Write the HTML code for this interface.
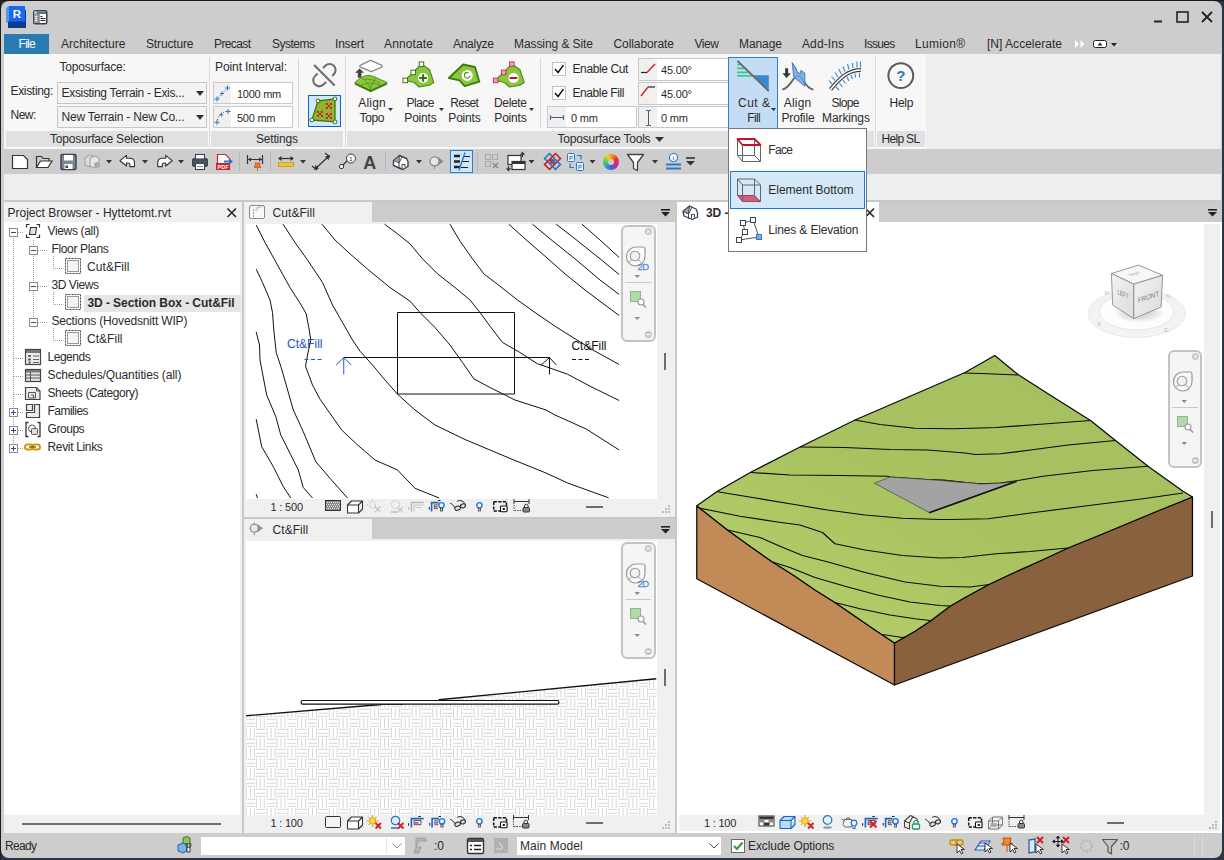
<!DOCTYPE html>
<html><head><meta charset="utf-8"><title>Revit</title>
<style>
html,body{margin:0;padding:0;}
body{width:1224px;height:860px;overflow:hidden;background:#cdcdcd;position:relative;font-family:"Liberation Sans",sans-serif;}
div{position:absolute;box-sizing:border-box;}
svg{position:absolute;overflow:visible;}
.t{white-space:nowrap;color:#2b2b2b;font-family:"Liberation Sans",sans-serif;}
.w{color:#fff;}
.b{font-weight:bold;}
.inp{background:#fff;border:1px solid #c8c8c8;}
.cmb{background:#f3f3f3;border:1px solid #c6c6c6;}
</style></head><body>
<svg style="left:6px;top:6px" width="22" height="24" viewBox="0 0 22 24">
<polygon points="0,2 3,0 3,16 0,17" fill="#5b93ec"/>
<rect x="3" y="0" width="16" height="16" fill="#1768f2"/>
<rect x="19" y="4" width="1" height="12" fill="#0c3c96"/>
<rect x="2" y="15.5" width="18" height="6.5" fill="#0b3a8e"/>
<text x="11" y="12" font-family="Liberation Sans, sans-serif" font-weight="bold" font-size="11.5" fill="#fff" text-anchor="middle">R</text>
</svg>
<svg style="left:33px;top:10px" width="15" height="15" viewBox="0 0 15 15">
<rect x="0.75" y="0.75" width="13" height="13" rx="1.5" fill="#fff" stroke="#3a3f48" stroke-width="1.5"/>
<rect x="1.5" y="1.5" width="11.5" height="2.5" fill="#6a7280"/>
<rect x="1.5" y="1.5" width="2" height="2" fill="#d8f4ff"/>
<rect x="1.5" y="4" width="4" height="9" fill="#9aa0aa"/>
<rect x="2.2" y="6" width="2" height="1" fill="#fff"/><rect x="2.2" y="8" width="2" height="1" fill="#fff"/><rect x="2.2" y="10" width="2" height="1" fill="#fff"/>
<rect x="5.5" y="4" width="1" height="9.5" fill="#3a3f48"/>
<rect x="7.5" y="6" width="2" height="1" fill="#222"/><rect x="7.5" y="8" width="5" height="1" fill="#222"/><rect x="7.5" y="10" width="5" height="1" fill="#222"/>
</svg>
<svg style="left:1150px;top:8px" width="70" height="18" viewBox="0 0 70 18">
<rect x="4" y="12.500" width="8" height="2" fill="#222"/>
<rect x="27" y="4" width="11" height="10" fill="none" stroke="#222" stroke-width="1.6"/>
<path d="M52 4 L62 14 M62 4 L52 14" stroke="#222" stroke-width="1.8" fill="none"/>
</svg>
<div style="left:4px;top:34px;width:45px;height:20px;background:#2a7ab2;"></div>
<div class="t w" style="left:18.5px;top:37.34px;font-size:12px;line-height:14px;letter-spacing:-0.700px;">File</div>
<div class="t" style="left:61px;top:37.34px;font-size:12px;line-height:14px;letter-spacing:0.043px;">Architecture</div>
<div class="t" style="left:146px;top:37.34px;font-size:12px;line-height:14px;letter-spacing:-0.148px;">Structure</div>
<div class="t" style="left:214px;top:37.34px;font-size:12px;line-height:14px;letter-spacing:-0.614px;">Precast</div>
<div class="t" style="left:272px;top:37.34px;font-size:12px;line-height:14px;letter-spacing:-0.501px;">Systems</div>
<div class="t" style="left:335px;top:37.34px;font-size:12px;line-height:14px;letter-spacing:-0.202px;">Insert</div>
<div class="t" style="left:384px;top:37.34px;font-size:12px;line-height:14px;letter-spacing:0.137px;">Annotate</div>
<div class="t" style="left:453px;top:37.34px;font-size:12px;line-height:14px;letter-spacing:-0.282px;">Analyze</div>
<div class="t" style="left:514px;top:37.34px;font-size:12px;line-height:14px;letter-spacing:-0.080px;">Massing &amp; Site</div>
<div class="t" style="left:613.5px;top:37.34px;font-size:12px;line-height:14px;letter-spacing:-0.087px;">Collaborate</div>
<div class="t" style="left:694.5px;top:37.34px;font-size:12px;line-height:14px;letter-spacing:-0.431px;">View</div>
<div class="t" style="left:739px;top:37.34px;font-size:12px;line-height:14px;letter-spacing:-0.073px;">Manage</div>
<div class="t" style="left:802px;top:37.34px;font-size:12px;line-height:14px;letter-spacing:0.107px;">Add-Ins</div>
<div class="t" style="left:864px;top:37.34px;font-size:12px;line-height:14px;letter-spacing:-0.700px;">Issues</div>
<div class="t" style="left:915px;top:37.34px;font-size:12px;line-height:14px;letter-spacing:0.300px;">Lumion®</div>
<div class="t" style="left:987px;top:37.34px;font-size:12px;line-height:14px;letter-spacing:0.023px;">[N] Accelerate</div>
<svg style="left:1074px;top:38px" width="50" height="12" viewBox="0 0 50 12">
<path d="M1 2 L5 6 L1 10 Z M6.5 2 L10.5 6 L6.5 10 Z" fill="#ffffff"/>
<rect x="19.5" y="2.5" width="13" height="7" rx="2" fill="#fff" stroke="#222" stroke-width="1"/>
<path d="M23.5 7.5 L26 4.5 L28.5 7.5 Z" fill="#222"/>
<path d="M37 5 L43 5 L40 8.5 Z" fill="#222"/>
</svg>
<div style="left:4px;top:54px;width:1217px;height:95px;background:#eeeeee;"></div>
<div style="left:4px;top:54px;width:922px;height:95px;background:#f7f7f7;"></div>
<div style="left:6px;top:131px;width:202px;height:16px;background:#e0e1e3;"></div>
<div style="left:211px;top:131px;width:132px;height:16px;background:#e0e1e3;"></div>
<div style="left:347px;top:131px;width:527px;height:16px;background:#e0e1e3;"></div>
<div style="left:877px;top:131px;width:48px;height:16px;background:#e0e1e3;"></div>
<div style="left:209px;top:56px;width:1px;height:92px;background:#dcdcdc;"></div>
<div style="left:345px;top:56px;width:1px;height:92px;background:#dcdcdc;"></div>
<div style="left:875px;top:56px;width:1px;height:92px;background:#dcdcdc;"></div>
<div style="left:298px;top:58px;width:1px;height:70px;background:#d8d8d8;"></div>
<div style="left:540px;top:58px;width:1px;height:70px;background:#d8d8d8;"></div>
<div class="t" style="left:59.5px;top:59.84px;font-size:12px;line-height:14px;letter-spacing:-0.223px;">Toposurface:</div>
<div class="t" style="left:10.5px;top:84.34px;font-size:12px;line-height:14px;letter-spacing:-0.325px;">Existing:</div>
<div class="t" style="left:10.5px;top:108.34px;font-size:12px;line-height:14px;letter-spacing:-0.530px;">New:</div>
<div class="cmb" style="left:57px;top:82px;width:150px;height:22px;"></div>
<div class="cmb" style="left:57px;top:106px;width:150px;height:22px;"></div>
<div class="t" style="left:61.5px;top:86.34px;font-size:12px;line-height:14px;letter-spacing:-0.314px;">Exsisting Terrain - Exis...</div>
<div class="t" style="left:61.5px;top:110.34px;font-size:12px;line-height:14px;letter-spacing:-0.189px;">New Terrain - New Co...</div>
<svg style="left:195px;top:90px" width="10" height="30" viewBox="0 0 10 30"><path d="M1 1 L9 1 L5 6 Z M1 25 L9 25 L5 30 Z" fill="#333"/></svg>
<div class="t" style="left:50px;top:131.84px;font-size:12px;line-height:14px;letter-spacing:-0.216px;">Toposurface Selection</div>
<div class="t" style="left:215px;top:59.84px;font-size:12px;line-height:14px;letter-spacing:-0.098px;">Point Interval:</div>
<div class="inp" style="left:213px;top:82px;width:80px;height:22px;"></div>
<div class="inp" style="left:213px;top:106px;width:80px;height:22px;"></div>
<div style="left:214px;top:83px;width:17px;height:20px;background:#f0f0f0;"></div>
<div style="left:214px;top:107px;width:17px;height:20px;background:#f0f0f0;"></div>
<div class="t" style="left:237px;top:88.19px;font-size:11px;line-height:13px;letter-spacing:-0.267px;">1000 mm</div>
<div class="t" style="left:237px;top:112.19px;font-size:11px;line-height:13px;letter-spacing:-0.247px;">500 mm</div>
<svg style="left:214px;top:83px" width="18" height="44" viewBox="0 0 18 44">
<g stroke="#2b78c5" stroke-width="1" fill="none">
<path d="M3 13.500 v5 M0.500 16 h5 M8 8.500 v4 M6 10.500 h4 M13.500 2.500 v5 M11 5 h5"/>
<path d="M4.500 14.500 L12 6.500" stroke-dasharray="1 1.500" stroke="#555"/>
<path d="M3 36.800 v5 M0.500 39.300 h5 M7.300 29.800 v4 M5.300 31.800 h4 M14 26 v5 M11.500 28.500 h5"/>
<path d="M3.500 37 C4 33 6 30 12 28.500" stroke-dasharray="1 1.500" stroke="#555"/>
</g></svg>
<div class="t" style="left:256px;top:131.84px;font-size:12px;line-height:14px;letter-spacing:-0.194px;">Settings</div>
<svg style="left:0px;top:0px" width="1224" height="860" viewBox="0 0 1224 860">
<g transform="translate(324.400 75.200) rotate(-45)" stroke="#6e6e6e" stroke-width="2.100" fill="none">
<path d="M4 -6 H7.300 A6 6 0 0 1 7.300 6 H5"/>
<path d="M-3.600 -6 H-7.300 A6 6 0 0 0 -7.300 6 H-3.600"/>
<path d="M0 -14.500 V14.500"/>
</g></svg>
<div style="left:308px;top:95px;width:32.5px;height:32px;background:#d2e8f8;border:1.300px solid #0a64c8;"></div>
<svg style="left:0px;top:0px" width="1224" height="860" viewBox="0 0 1224 860"><polygon points="318,101 335,98.900 335,121.900 311.900,120" fill="#8cb82a" stroke="#3a7a12" stroke-width="1.300" stroke-linejoin="round"/><rect x="325.9" y="102.9" width="2" height="2" fill="#e0104a"/><rect x="329.9" y="102.9" width="2" height="2" fill="#e0104a"/><rect x="327.9" y="104.9" width="2" height="2" fill="#e0104a"/><rect x="325.9" y="106.9" width="2" height="2" fill="#e0104a"/><rect x="329.9" y="106.9" width="2" height="2" fill="#e0104a"/><rect x="316.9" y="110.9" width="2" height="2" fill="#e0104a"/><rect x="320.9" y="110.9" width="2" height="2" fill="#e0104a"/><rect x="318.9" y="112.9" width="2" height="2" fill="#e0104a"/><rect x="316.9" y="114.9" width="2" height="2" fill="#e0104a"/><rect x="320.9" y="114.9" width="2" height="2" fill="#e0104a"/><rect x="325.9" y="113.0" width="2" height="2" fill="#e0104a"/><rect x="329.9" y="113.0" width="2" height="2" fill="#e0104a"/><rect x="327.9" y="115.0" width="2" height="2" fill="#e0104a"/><rect x="325.9" y="117.0" width="2" height="2" fill="#e0104a"/><rect x="329.9" y="117.0" width="2" height="2" fill="#e0104a"/><rect x="316.3" y="99.3" width="3.400" height="3.400" rx="0.800" fill="#fff" stroke="#3a6a12" stroke-width="1"/><rect x="333.3" y="97.2" width="3.400" height="3.400" rx="0.800" fill="#fff" stroke="#3a6a12" stroke-width="1"/><rect x="333.3" y="120.2" width="3.400" height="3.400" rx="0.800" fill="#fff" stroke="#3a6a12" stroke-width="1"/><rect x="310.2" y="118.3" width="3.400" height="3.400" rx="0.800" fill="#fff" stroke="#3a6a12" stroke-width="1"/></svg>
<div class="t" style="left:332px;top:96.24px;font-size:12px;line-height:14px;width:80px;text-align:center;letter-spacing:0.154px;text-indent:0.154px;">Align</div>
<div class="t" style="left:332px;top:110.54px;font-size:12px;line-height:14px;width:80px;text-align:center;letter-spacing:-0.341px;text-indent:-0.341px;">Topo</div>
<div class="t" style="left:380.5px;top:96.24px;font-size:12px;line-height:14px;width:80px;text-align:center;letter-spacing:-0.505px;text-indent:-0.505px;">Place</div>
<div class="t" style="left:380.5px;top:110.54px;font-size:12px;line-height:14px;width:80px;text-align:center;letter-spacing:-0.211px;text-indent:-0.211px;">Points</div>
<div class="t" style="left:424.5px;top:96.24px;font-size:12px;line-height:14px;width:80px;text-align:center;letter-spacing:-0.700px;text-indent:-0.700px;">Reset</div>
<div class="t" style="left:424.5px;top:110.54px;font-size:12px;line-height:14px;width:80px;text-align:center;letter-spacing:-0.211px;text-indent:-0.211px;">Points</div>
<div class="t" style="left:470.5px;top:96.24px;font-size:12px;line-height:14px;width:80px;text-align:center;letter-spacing:-0.338px;text-indent:-0.338px;">Delete</div>
<div class="t" style="left:470.5px;top:110.54px;font-size:12px;line-height:14px;width:80px;text-align:center;letter-spacing:-0.211px;text-indent:-0.211px;">Points</div>
<svg style="left:388px;top:108px" width="150" height="6" viewBox="0 0 150 6"><path d="M0 0 h5 l-2.5 3 z M51 0 h5 l-2.5 3 z M141 0 h5 l-2.5 3 z" fill="#333"/></svg>
<svg style="left:0px;top:0px" width="1224" height="860" viewBox="0 0 1224 860"><path d="M360 65.300 L370.600 60.300 L382 65.300 L382 66.800 L371.300 71.600 L360 66.800 Z" fill="#fff" stroke="#8a8a8a" stroke-width="1.300" stroke-linejoin="round"/><path d="M355.100 72.700 L359.600 68.500 L364.100 72.700 L361.400 72.700 L361.400 77.800 L357.800 77.800 L357.800 72.700 Z" fill="#444"/><path d="M355.100 82.200 C359 79 364 75 369.100 75.400 C374 75.800 380 80 386.800 82.200 L386.800 84.200 L370.600 91.700 L355.100 84.200 Z" fill="#8cc63e" stroke="#4e8f1e" stroke-width="1" stroke-linejoin="round"/><path d="M355.100 84.200 L370.600 91.700 L386.800 84.200 L386.800 82.500 L370.600 90 L355.100 82.500 Z" fill="#3d7a12"/><path d="M362 78 C366 81 369 85 370.600 90 M376 78.500 C373 82 371 85 370.600 90 M361 85.500 C366 83 372 82 381 85.500 M364 79.500 C369 79 376 80 380 83.500" stroke="#4e8f1e" stroke-width="0.800" fill="none"/><g transform="translate(0 0)"><path d="M405.100 80.300 L413.200 72.500 L421.300 64.100 L429.400 69.500 L433.800 82.500 L429.400 85.200 L419.100 87 L414.200 82.500 Z" fill="#8cc63e" stroke="#4e8f1e" stroke-width="1.200" stroke-linejoin="round"/><rect x="403" y="78.2" width="4.500" height="4.500" fill="#fff" stroke="#3d7a12" stroke-width="1"/><rect x="411" y="70.2" width="4.500" height="4.500" fill="#fff" stroke="#3d7a12" stroke-width="1"/><rect x="419.2" y="61.9" width="4.500" height="4.500" fill="#fff" stroke="#3d7a12" stroke-width="1"/><circle cx="423.100" cy="78" r="5.100" fill="#fff"/><path d="M419.300 78 h7.600 M423.100 74.200 v7.600" stroke="#2a6e12" stroke-width="2"/></g><path d="M448.800 78 L463.200 64.500 L475 67 L479.400 81.700 L464.700 86.100 L459.600 80.300 Z" fill="#8cc63e" stroke="#3d7a12" stroke-width="1.800" stroke-linejoin="round"/><circle cx="467.200" cy="75.400" r="5.500" fill="#fff"/><path d="M470 75.400 a2.800 2.800 0 1 1 -1.300 -2.400" stroke="#4e8f1e" stroke-width="1.100" fill="none"/><path d="M464.300 72.600 l2.200 -0.400 l-0.600 2.300 z" fill="#4e8f1e"/><g transform="translate(90.4 0)"><path d="M405.100 80.300 L413.200 72.500 L421.300 64.100 L429.400 69.500 L433.800 82.500 L429.400 85.200 L419.100 87 L414.200 82.500 Z" fill="#8cc63e" stroke="#4e8f1e" stroke-width="1.200" stroke-linejoin="round"/><rect x="403" y="78.2" width="4.500" height="4.500" fill="#f4a0b4" stroke="#b84060" stroke-width="1"/><rect x="411" y="70.2" width="4.500" height="4.500" fill="#f4a0b4" stroke="#b84060" stroke-width="1"/><rect x="419.2" y="61.9" width="4.500" height="4.500" fill="#f4a0b4" stroke="#b84060" stroke-width="1"/><circle cx="423.100" cy="78" r="5.100" fill="#fff"/><path d="M419.300 78 h7.600" stroke="#c8102e" stroke-width="2"/></g></svg>
<div style="left:552px;top:62px;width:14px;height:14px;background:#fff;border:1px solid #c0c0c0;"></div>
<svg style="left:552px;top:62px" width="14" height="14" viewBox="0 0 14 14"><path d="M3 7 L6 10.500 L11.500 3" stroke="#111" stroke-width="1.4" fill="none"/></svg>
<div style="left:552px;top:86px;width:14px;height:14px;background:#fff;border:1px solid #c0c0c0;"></div>
<svg style="left:552px;top:86px" width="14" height="14" viewBox="0 0 14 14"><path d="M3 7 L6 10.500 L11.500 3" stroke="#111" stroke-width="1.4" fill="none"/></svg>
<div class="t" style="left:572.5px;top:61.84px;font-size:12px;line-height:14px;letter-spacing:-0.397px;">Enable Cut</div>
<div class="t" style="left:572.5px;top:85.84px;font-size:12px;line-height:14px;letter-spacing:-0.413px;">Enable Fill</div>
<div class="inp" style="left:638px;top:58px;width:91px;height:23px;"></div>
<div class="inp" style="left:638px;top:82px;width:91px;height:23px;"></div>
<div class="inp" style="left:547px;top:106px;width:90px;height:22px;"></div>
<div class="inp" style="left:638px;top:106px;width:91px;height:22px;"></div>
<div style="left:639px;top:59px;width:18px;height:21px;background:#f0f0f0;"></div>
<div style="left:639px;top:83px;width:18px;height:21px;background:#f0f0f0;"></div>
<div style="left:548px;top:107px;width:18px;height:20px;background:#f0f0f0;"></div>
<div style="left:639px;top:107px;width:18px;height:20px;background:#f0f0f0;"></div>
<div class="t" style="left:661px;top:63.69px;font-size:11px;line-height:13px;letter-spacing:-0.185px;">45.00°</div>
<div class="t" style="left:661px;top:87.69px;font-size:11px;line-height:13px;letter-spacing:-0.185px;">45.00°</div>
<div class="t" style="left:571px;top:111.99px;font-size:11px;line-height:13px;letter-spacing:-0.167px;">0 mm</div>
<div class="t" style="left:661px;top:111.99px;font-size:11px;line-height:13px;letter-spacing:-0.167px;">0 mm</div>
<svg style="left:639px;top:59px" width="18" height="68" viewBox="0 0 18 68">
<path d="M2 13.500 h6" stroke="#222" stroke-width="1.2"/><path d="M8 13.500 L16 5" stroke="#d0202a" stroke-width="1.4"/>
<path d="M9 28 h7" stroke="#222" stroke-width="1.2"/><path d="M2 37 L9 28" stroke="#d0202a" stroke-width="1.4"/>
<path d="M9.5 52 v14" stroke="#555" stroke-width="1"/><path d="M7 51.500 h5 M7 66.500 h5" stroke="#2b78c5" stroke-width="1.2"/>
</svg>
<svg style="left:548px;top:107px" width="18" height="20" viewBox="0 0 18 20"><path d="M2 10.500 h14" stroke="#555" stroke-width="1"/><path d="M2.500 8 v5 M15.500 8 v5" stroke="#2b78c5" stroke-width="1.2"/></svg>
<div style="left:728px;top:57px;width:50px;height:72px;background:#c5ddf4;border:1px solid #2b7fd0;"></div>
<div class="t" style="left:714px;top:96.24px;font-size:12px;line-height:14px;width:80px;text-align:center;letter-spacing:0.497px;text-indent:0.497px;">Cut &amp;</div>
<div class="t" style="left:714px;top:110.54px;font-size:12px;line-height:14px;width:80px;text-align:center;letter-spacing:-0.610px;text-indent:-0.610px;">Fill</div>
<svg style="left:771px;top:108px" width="6" height="4" viewBox="0 0 6 4"><path d="M0 0 h5 l-2.500 3 z" fill="#333"/></svg>
<svg style="left:0px;top:0px" width="1224" height="860" viewBox="0 0 1224 860">
<polygon points="753,75.300 768.800,75.300 768.800,90" fill="#3c85d0"/>
<path d="M737.100 64.500 H741.500 M737.100 68.400 H745.300 M737.100 72.300 H748.900 M737.100 75.900 H752.100" stroke="#3cc88c" stroke-width="1.700"/>
<path d="M737.400 60.900 L768.800 91.100" stroke="#666" stroke-width="1.900"/>
<path d="M785.200 68.300 H788.100 V73.200 H790.900 L786.600 78 L782.400 73.200 H785.200 Z" fill="#333"/>
<path d="M782.400 89.500 C790 88.500 793 76 797.900 75.600 C803 76 805 88.500 813.400 89.500" stroke="#666" stroke-width="1.900" fill="none"/>
<path d="M792.200 62.500 L796.600 69.100 L796.600 71.500 L800.800 74 L800.800 70.400 L804.800 73.200 L804.800 86.200 L793.800 77.200 Z" fill="#6ea4e0" fill-opacity="0.850" stroke="#3c7ac8" stroke-width="1" stroke-linejoin="round"/>
<path d="M830.500 89.500 C840 78 848 70 861 70" stroke="#444" stroke-width="4" fill="none"/>
<path d="M830.500 89.500 C840 78 848 70 861 70" stroke="#fff" stroke-width="1.600" fill="none"/>
<path d="M832 84 l-3 -3.500 M835 80.500 l-3.500 -4 M838 77 l-3 -4.500 M841.500 74 l-3 -5 M845 71.500 l-2 -5 M849 69.500 l-1.500 -5.500 M853 68 l-0.500 -5 M857 67.500 l0 -6 M860.500 67.500 l0 -6" stroke="#2b8ad8" stroke-width="1.100"/>
<path d="M836 87 l3 3 M839.500 83.500 l3 3.500 M843 80 l2.500 3.500 M847 77 l2 4 M851 75 l1.500 4 M855 73.500 l0.500 4 M859.500 73 l0 4.500" stroke="#2b8ad8" stroke-width="1.100"/>
<circle cx="900.800" cy="75.600" r="12.400" fill="none" stroke="#5a5a5a" stroke-width="2"/>
<text x="900.800" y="81" font-family="Liberation Sans, sans-serif" font-weight="bold" font-size="15" fill="#2b78c5" text-anchor="middle">?</text>
</svg>
<div class="t" style="left:757.5px;top:96.24px;font-size:12px;line-height:14px;width:80px;text-align:center;letter-spacing:0.154px;text-indent:0.154px;">Align</div>
<div class="t" style="left:758px;top:110.54px;font-size:12px;line-height:14px;width:80px;text-align:center;letter-spacing:-0.136px;text-indent:-0.136px;">Profile</div>
<div class="t" style="left:805.5px;top:96.24px;font-size:12px;line-height:14px;width:80px;text-align:center;letter-spacing:-0.673px;text-indent:-0.673px;">Slope</div>
<div class="t" style="left:806px;top:110.54px;font-size:12px;line-height:14px;width:80px;text-align:center;letter-spacing:-0.126px;text-indent:-0.126px;">Markings</div>
<div class="t" style="left:861.5px;top:96.24px;font-size:12px;line-height:14px;width:80px;text-align:center;letter-spacing:-0.260px;text-indent:-0.260px;">Help</div>
<div class="t" style="left:557.5px;top:131.84px;font-size:12px;line-height:14px;letter-spacing:-0.213px;">Toposurface Tools</div>
<svg style="left:655px;top:137px" width="10" height="6" viewBox="0 0 10 6"><path d="M0 0 h9 l-4.500 5 z" fill="#333"/></svg>
<div class="t" style="left:881.6px;top:131.84px;font-size:12px;line-height:14px;letter-spacing:-0.700px;">Help SL</div>
<div style="left:4px;top:149px;width:1217px;height:25px;background:#cdcdcd;"></div>
<div style="left:4px;top:174px;width:1217px;height:26px;background:#eeeeee;"></div>
<svg style="left:0px;top:149px" width="720" height="25" viewBox="0 0 720 25">
<!-- new -->
<path d="M12.500 6.500 h11 l4 4 v9 h-15 z" fill="#fff" stroke="#333" stroke-width="1.2"/>
<!-- open -->
<path d="M36.500 18.500 v-11 h5 l1.500 2 h6 v3" stroke="#333" stroke-width="1.2" fill="none"/><path d="M36.500 18.500 l4 -6.500 h11.500 l-4 6.500 z" fill="#fff" stroke="#333" stroke-width="1.2"/>
<!-- save -->
<rect x="61" y="5.500" width="15" height="15" rx="1" fill="#7c8796" stroke="#39424f" stroke-width="1.4"/><rect x="64" y="6" width="9" height="5.500" fill="#fff"/><rect x="64.500" y="15" width="8" height="5" fill="#fff"/><rect x="65.500" y="16.500" width="2.500" height="2.500" fill="#39424f"/>
<!-- sync (disabled) -->
<g stroke="#9a9a9a" stroke-width="1" fill="#dcdcdc"><path d="M85 9 l5 -3 l5 2 v7 l-5 3 l-5 -2 z"/><path d="M90 9 l5 -2 l4 2 v7 l-5 3 l-4 -2 z" fill="#e6e6e6"/></g><circle cx="97" cy="16" r="3" fill="#aaa"/>
<path d="M106 11 h6 l-3 3.500 z" fill="#333"/>
<!-- undo -->
<path d="M120 11.700 L126.500 6.300 V9.200 H130 Q134.500 9.200 134.500 14 V17.600 H129.800 V15.200 Q129.800 14 128.500 14 H126.500 V17 Z" fill="#fff" stroke="#333" stroke-width="1.100" stroke-linejoin="round"/>
<path d="M142 11 h6 l-3 3.500 z" fill="#333"/>
<!-- redo -->
<path d="M172.200 11.700 L165.700 6.300 V9.200 H162.200 Q157.700 9.200 157.700 14 V17.600 H162.400 V15.200 Q162.400 14 163.700 14 H165.700 V17 Z" fill="#fff" stroke="#333" stroke-width="1.100" stroke-linejoin="round"/>
<path d="M178 11 h6 l-3 3.500 z" fill="#333"/>
<!-- print -->
<rect x="192.500" y="9.500" width="15" height="8" rx="1.500" fill="#4a5260" stroke="#39424f" stroke-width="1"/><rect x="195.500" y="5.500" width="9" height="4.500" fill="#fff" stroke="#39424f" stroke-width="1.100"/><rect x="195.500" y="14.500" width="9" height="6" fill="#fff" stroke="#39424f" stroke-width="1.100"/><path d="M197 17.500 h6" stroke="#888" stroke-width="1"/>
<!-- pdf -->
<path d="M217.500 5.500 h8 l4 4 v11 h-12 z" fill="#fff" stroke="#d0202a" stroke-width="1.2"/><rect x="216" y="14" width="14" height="7" fill="#d0202a"/><text x="223" y="20" font-size="5.500" font-weight="bold" fill="#fff" text-anchor="middle" font-family="Liberation Sans, sans-serif">PDF</text><path d="M224 11.500 h5 v-2.500 l4 3.500 l-4 3.500 v-2.500 h-5 z" fill="#2b78c5"/>
<path d="M239.500 3 v19" stroke="#b8b8b8" stroke-width="1"/>
<!-- aligned dim -->
<path d="M247.500 6 v9 M262.500 6 v9 M248 10.500 h14" stroke="#333" stroke-width="1.2" fill="none"/><path d="M248 10.500 l3 -2 v4 z M262 10.500 l-3 -2 v4 z" fill="#333"/><path d="M255 14 h5 l-1 3 h1.500 v1.500 h-6 v-1.500 h1.500 z M257.500 18.500 v3.500" fill="#f08030" stroke="#c85010" stroke-width="0.800"/>
<path d="M270.500 3 v19" stroke="#b8b8b8" stroke-width="1"/>
<!-- measure -->
<path d="M279 9.500 h14" stroke="#333" stroke-width="1.2" fill="none"/><path d="M278 9.500 l3.500 -2.500 v5 z M294 9.500 l-3.500 -2.500 v5 z" fill="#333"/><rect x="278.500" y="13.500" width="15" height="4" fill="#f4c430" stroke="#c89a10" stroke-width="0.800"/>
<path d="M300 11 h6 l-3 3.500 z" fill="#333"/>
<!-- tag arrows -->
<path d="M315 20 L329 7" stroke="#333" stroke-width="1.2" fill="none"/><path d="M314 21 l1.500 -5 l3.500 3.500 z M330 6 l-1.500 5 l-3.500 -3.500 z" fill="#333"/><path d="M325 4 l5 4 M312 17 l5 4" stroke="#333" stroke-width="1.2" fill="none"/>
<!-- tag by category -->
<circle cx="351" cy="9.500" r="4.500" fill="#fff" stroke="#333" stroke-width="1"/><text x="351" y="12" font-size="6" fill="#222" text-anchor="middle" font-family="Liberation Sans, sans-serif">1</text><path d="M347 12 l-4 4" stroke="#333" stroke-width="1.2" fill="none"/><rect x="339.500" y="15.500" width="4" height="4" rx="1.500" fill="#fff" stroke="#333" stroke-width="1"/>
<!-- A -->
<text x="369.700" y="19.500" font-family="Liberation Sans, sans-serif" font-weight="bold" font-size="18" fill="#444" text-anchor="middle">A</text>
<path d="M385.500 3 v19" stroke="#b8b8b8" stroke-width="1"/>
<!-- 3D house -->
<path d="M393.500 11.500 l6 -5 l7 3 l1.500 3 v5 l-5 3 l-9.500 -4 z" fill="#fff" stroke="#39424f" stroke-width="1.400" stroke-linejoin="round"/><path d="M399.500 6.500 l-6 5 l5.500 2.500 z" fill="#9aa3b0" stroke="#39424f" stroke-width="0.800"/><path d="M399 14 v6 M399 14 l3.500 -7 M402 20 v-4.500 h3 v3" fill="none" stroke="#39424f" stroke-width="1"/>
<path d="M416 11 h6 l-3 3.500 z" fill="#333"/>
<!-- section -->
<path d="M438 8 L443.500 12.300 L438 16.500 Z" fill="#8a8a8a"/><circle cx="434.500" cy="12.300" r="4.500" fill="#e8e8e8" stroke="#8a8a8a" stroke-width="1.300"/><path d="M434.500 17 v3" stroke="#8a8a8a" stroke-width="1"/>
<!-- thin lines (active) -->
<rect x="450.500" y="1.500" width="22" height="22" fill="#cfe4f7" stroke="#2b7fd0" stroke-width="1"/>
<path d="M454 7 h6 M454 12.500 h6 M454 18 h6" stroke="#222" stroke-width="2.600"/><path d="M463 7.500 h7 M462 12.500 h7 M461 18.500 h7" stroke="#222" stroke-width="1"/><path d="M465 3.500 L459 21.500" stroke="#2b78c5" stroke-width="1.400"/>
<path d="M477.500 3 v19" stroke="#b8b8b8" stroke-width="1"/>
<!-- close hidden (disabled) -->
<g fill="none" stroke="#aaa" stroke-width="1"><rect x="485.500" y="5.500" width="5" height="5"/><rect x="492.500" y="5.500" width="5" height="5"/><rect x="485.500" y="12.500" width="5" height="5"/></g><path d="M493 14 l5 5 m0 -5 l-5 5" stroke="#888" stroke-width="1.600"/>
<!-- switch windows --><g transform="translate(-1.500 0)">
<rect x="509.500" y="6.500" width="13" height="9" fill="#fff" stroke="#333" stroke-width="1.200"/><rect x="513.500" y="12.500" width="13" height="8" fill="#fff" stroke="#333" stroke-width="1.200"/><path d="M513.500 14 h13" stroke="#333" stroke-width="2"/><path d="M524 4 v4 M522 6 l2 -2.500 l2 2.500 M510 17 v4 M508 19 l2 2.500 l2 -2.500" stroke="#333" stroke-width="1.2" fill="none"/>
</g><path d="M528.500 11 h6 l-3 3.500 z" fill="#333"/>
<!-- coloured diamonds -->
<g fill="none" stroke-width="1.600"><rect x="546" y="6" width="7" height="7" transform="rotate(45 549.500 9.500)" stroke="#2b78c5"/><rect x="552" y="6" width="7" height="7" transform="rotate(45 555.500 9.500)" stroke="#d0202a"/><rect x="546" y="12" width="7" height="7" transform="rotate(45 549.500 15.500)" stroke="#d0202a"/><rect x="552" y="12" width="7" height="7" transform="rotate(45 555.500 15.500)" stroke="#2b78c5"/></g>
<!-- P arrows --><g transform="translate(-4 0)">
<g fill="#e8f0fa" stroke="#2b78c5" stroke-width="1"><rect x="571.500" y="4.500" width="7" height="8" rx="1"/><rect x="580.500" y="13.500" width="7" height="8" rx="1"/></g><text x="575" y="11" font-size="6" fill="#1a4a90" text-anchor="middle" font-family="Liberation Sans, sans-serif">P</text><text x="584" y="20" font-size="6" fill="#1a4a90" text-anchor="middle" font-family="Liberation Sans, sans-serif">P</text><path d="M581 6.500 h4 v4 M578 18.500 h-4 v-4" fill="none" stroke="#2b78c5" stroke-width="1.200"/>
</g><path d="M589.500 11 h6 l-3 3.500 z" fill="#333"/>
<!-- funnel -->
<path d="M627.500 5.500 h16 l-6 8 v8 l-4 -2 v-6 z" fill="#fff" stroke="#444" stroke-width="1.300" stroke-linejoin="round"/>
<path d="M652 11 h6 l-3 3.500 z" fill="#333"/>
<!-- stamp -->
<circle cx="673.500" cy="8.500" r="4" fill="#fff" stroke="#2b78c5" stroke-width="1.200"/><text x="673.500" y="11" font-size="6" fill="#222" text-anchor="middle" font-family="Liberation Sans, sans-serif">t</text><path d="M666 15.500 h15 M666 19.500 h15" stroke="#2b78c5" stroke-width="2"/>
<path d="M686 9 h9" stroke="#333" stroke-width="1.600"/><path d="M686 12 h9 l-4.500 4.500 z" fill="#333"/>
</svg>
<div style="left:602.500px;top:153.500px;width:16.500px;height:16.500px;border-radius:50%;background:conic-gradient(from -30deg,#f2d21c,#f08a1c,#e8382c,#d03080,#8040c0,#2878d8,#28b4a0,#7ac83c,#f2d21c);"></div><div style="left:607.500px;top:158.500px;width:6.500px;height:6.500px;border-radius:50%;background:#cdcdcd;"></div>
<div style="left:4px;top:200px;width:1217px;height:2px;background:#c8c8c8;"></div>
<div style="left:4px;top:202px;width:238px;height:631.5px;background:#f0f0f0;"></div>
<div style="left:4px;top:222px;width:236px;height:593px;background:#ffffff;"></div>
<div class="t" style="left:7.5px;top:205.64px;font-size:12px;line-height:14px;letter-spacing:0.004px;">Project Browser - Hyttetomt.rvt</div>
<svg style="left:226px;top:207px" width="12" height="12" viewBox="0 0 12 12"><path d="M1.500 1.500 L10 10 M10 1.500 L1.500 10" stroke="#222" stroke-width="1.500"/></svg>
<div style="left:84px;top:294.5px;width:157px;height:17px;background:#e5e5e5;"></div>
<div class="t" style="left:47.5px;top:224.14px;font-size:12px;line-height:14px;letter-spacing:-0.343px;">Views (all)</div>
<div class="t" style="left:51.4px;top:242.14px;font-size:12px;line-height:14px;letter-spacing:-0.329px;">Floor Plans</div>
<div class="t" style="left:87px;top:260.14px;font-size:12px;line-height:14px;letter-spacing:0.070px;">Cut&amp;Fill</div>
<div class="t" style="left:51.4px;top:278.14px;font-size:12px;line-height:14px;letter-spacing:-0.424px;">3D Views</div>
<div class="t b" style="left:87.4px;top:296.14px;font-size:12px;line-height:14px;letter-spacing:-0.055px;">3D - Section Box - Cut&amp;Fil</div>
<div class="t" style="left:51.4px;top:314.14px;font-size:12px;line-height:14px;letter-spacing:-0.169px;">Sections (Hovedsnitt WIP)</div>
<div class="t" style="left:87px;top:332.14px;font-size:12px;line-height:14px;letter-spacing:0.028px;">Ct&amp;Fill</div>
<div class="t" style="left:47.5px;top:350.14px;font-size:12px;line-height:14px;letter-spacing:-0.474px;">Legends</div>
<div class="t" style="left:47.5px;top:368.14px;font-size:12px;line-height:14px;letter-spacing:-0.114px;">Schedules/Quantities (all)</div>
<div class="t" style="left:47.5px;top:386.14px;font-size:12px;line-height:14px;letter-spacing:-0.399px;">Sheets (Category)</div>
<div class="t" style="left:47.5px;top:404.14px;font-size:12px;line-height:14px;letter-spacing:-0.511px;">Families</div>
<div class="t" style="left:47.5px;top:422.14px;font-size:12px;line-height:14px;letter-spacing:-0.450px;">Groups</div>
<div class="t" style="left:47.5px;top:440.14px;font-size:12px;line-height:14px;letter-spacing:-0.339px;">Revit Links</div>
<svg style="left:0px;top:222px" width="241" height="240" viewBox="0 222 241 240"><path d="M13.500 238 V448 M18 232.500 h6 M33.500 240 V322 M38 250.500 h10 M38 286.500 h10 M38 322.500 h10 M53.500 256 V268.500 h10 M53.500 292 V304.500 h10 M53.500 328 V340.500 h10 M14 358.500 h10 M14 376.500 h10 M14 394.500 h10 M18 412.500 h6 M18 430.500 h6 M18 448.500 h6" stroke="#a0a0a0" stroke-width="1" stroke-dasharray="1 1" fill="none"/><rect x="9.5" y="228.5" width="8" height="8" fill="#fff" stroke="#8c8c8c" stroke-width="1"/><path d="M11 232.5 h5" stroke="#2a4a90" stroke-width="1"/><rect x="29.5" y="246.5" width="8" height="8" fill="#fff" stroke="#8c8c8c" stroke-width="1"/><path d="M31 250.5 h5" stroke="#2a4a90" stroke-width="1"/><rect x="29.5" y="282.5" width="8" height="8" fill="#fff" stroke="#8c8c8c" stroke-width="1"/><path d="M31 286.5 h5" stroke="#2a4a90" stroke-width="1"/><rect x="29.5" y="318.5" width="8" height="8" fill="#fff" stroke="#8c8c8c" stroke-width="1"/><path d="M31 322.5 h5" stroke="#2a4a90" stroke-width="1"/><rect x="9.5" y="408.5" width="8" height="8" fill="#fff" stroke="#8c8c8c" stroke-width="1"/><path d="M11 412.5 h5" stroke="#2a4a90" stroke-width="1"/><path d="M13.5 410 v5" stroke="#2a4a90" stroke-width="1"/><rect x="9.5" y="426.5" width="8" height="8" fill="#fff" stroke="#8c8c8c" stroke-width="1"/><path d="M11 430.5 h5" stroke="#2a4a90" stroke-width="1"/><path d="M13.5 428 v5" stroke="#2a4a90" stroke-width="1"/><rect x="9.5" y="444.5" width="8" height="8" fill="#fff" stroke="#8c8c8c" stroke-width="1"/><path d="M11 448.5 h5" stroke="#2a4a90" stroke-width="1"/><path d="M13.5 446 v5" stroke="#2a4a90" stroke-width="1"/><g stroke="#333" stroke-width="1.200" fill="none"><path d="M26.500 227.500 v-3 h3 M36.500 224.500 h3 v3 M39.500 234.500 v3 h-3 M29.500 237.500 h-3 v-3"/><path d="M30.500 227.500 h6 l-1 7 h-6 z" stroke-width="1.100" fill="#dfe3ea"/></g><rect x="65.5" y="258.5" width="15" height="15" fill="#fff" stroke="#444" stroke-width="1" stroke-dasharray="2 1"/><rect x="67.5" y="260.5" width="11" height="11" fill="#f4f4f4" stroke="#999" stroke-width="1"/><rect x="65.5" y="294.5" width="15" height="15" fill="#fff" stroke="#444" stroke-width="1" stroke-dasharray="2 1"/><rect x="67.5" y="296.5" width="11" height="11" fill="#f4f4f4" stroke="#999" stroke-width="1"/><rect x="65.5" y="330.5" width="15" height="15" fill="#fff" stroke="#444" stroke-width="1" stroke-dasharray="2 1"/><rect x="67.5" y="332.5" width="11" height="11" fill="#f4f4f4" stroke="#999" stroke-width="1"/><rect x="25.500" y="349.500" width="15" height="15" fill="#ececec" stroke="#444" stroke-width="1.200"/><rect x="26" y="350" width="14" height="3" fill="#777"/><g fill="#666"><rect x="28" y="355" width="3" height="2"/><rect x="28" y="358.500" width="3" height="2"/><circle cx="29.500" cy="362.500" r="1.200"/><rect x="33" y="355.500" width="6" height="1"/><rect x="33" y="359" width="6" height="1"/><rect x="33" y="362" width="6" height="1"/></g><rect x="25.500" y="369.500" width="15" height="12" fill="#e6e6e6" stroke="#444" stroke-width="1.200"/><rect x="26" y="370" width="14" height="2.500" fill="#777"/><path d="M26 375 h14 M26 378 h14 M30.500 372 v9" stroke="#555" stroke-width="1"/><path d="M25.500 387.500 h11 l3.500 3.500 v8.500 h-14.500 z" fill="#ececec" stroke="#444" stroke-width="1.200"/><path d="M28.500 392.500 h7 v5.500 h-7 z M31 395 h2.500 v3 M36.500 387.500 v3.500 h3.500" fill="none" stroke="#555" stroke-width="1"/><path d="M26.500 404.500 h6 v6 h-6 z M34.500 404.500 h5 v13 h-13 v-5 h8 z" fill="#ececec" stroke="#444" stroke-width="1.200"/><path d="M28.500 422.500 h-2.500 v14 h2.500 M37.500 422.500 h2.500 v14 h-2.500" fill="none" stroke="#333" stroke-width="1.300"/><circle cx="32" cy="428.500" r="3.500" fill="#fff" stroke="#555" stroke-width="1"/><rect x="31.500" y="428.500" width="6" height="6" rx="1" fill="#ddd" stroke="#555" stroke-width="1"/><g fill="none" stroke="#d09a10" stroke-width="2"><rect x="25" y="444.500" width="8" height="5" rx="2.500"/><rect x="32" y="444.500" width="8" height="5" rx="2.500"/></g><path d="M29 447 h7" stroke="#7a5a00" stroke-width="1.400"/></svg>
<div style="left:22px;top:823px;width:199px;height:2px;background:#6e6e6e;"></div>
<div style="left:242px;top:200px;width:2px;height:633px;background:#c8c8c8;"></div>
<div style="left:675px;top:200px;width:2px;height:633px;background:#c8c8c8;"></div>
<div style="left:244px;top:202px;width:431px;height:20px;background:#cccccc;"></div>
<div style="left:244px;top:202px;width:128px;height:20px;background:#f0f0f0;"></div>
<div style="left:244px;top:222px;width:431px;height:295px;background:#f0f0f0;"></div>
<div style="left:244px;top:222px;width:431px;height:2px;background:#f0f0f0;"></div>
<div style="left:246px;top:224px;width:411px;height:274.5px;background:#ffffff;"></div>
<div style="left:244px;top:517px;width:431px;height:2px;background:#c8c8c8;"></div>
<div style="left:244px;top:519px;width:431px;height:20px;background:#cccccc;"></div>
<div style="left:244px;top:519px;width:128px;height:20px;background:#f0f0f0;"></div>
<div style="left:244px;top:539px;width:431px;height:294.5px;background:#f0f0f0;"></div>
<div style="left:244px;top:539px;width:431px;height:2px;background:#f0f0f0;"></div>
<div style="left:246px;top:541px;width:411px;height:274.0px;background:#ffffff;"></div>
<div style="left:677px;top:202px;width:545px;height:20px;background:#cccccc;"></div>
<div style="left:677px;top:202px;width:202px;height:20px;background:#ffffff;"></div>
<div style="left:677px;top:222px;width:545px;height:611.5px;background:#f0f0f0;"></div>
<div style="left:677px;top:222px;width:545px;height:2px;background:#ffffff;"></div>
<div style="left:677px;top:224px;width:527px;height:591.0px;background:#ffffff;"></div>
<div style="left:1220px;top:222px;width:2px;height:611.5px;background:#ffffff;"></div>
<div style="left:677px;top:831px;width:545px;height:2.5px;background:#ffffff;"></div>
<div style="left:677px;top:815px;width:2px;height:18px;background:#ffffff;"></div>
<div class="t" style="left:272.5px;top:206.34px;font-size:12px;line-height:14px;letter-spacing:0.070px;">Cut&amp;Fill</div>
<div class="t" style="left:272.6px;top:523.34px;font-size:12px;line-height:14px;letter-spacing:0.028px;">Ct&amp;Fill</div>
<div class="t b" style="left:706px;top:205.54px;font-size:12px;line-height:14px;letter-spacing:-0.058px;">3D - Section Box - Cut&amp;Fill</div>
<svg style="left:864px;top:207px" width="12" height="12" viewBox="0 0 12 12"><path d="M1.500 1.500 L10 10 M10 1.500 L1.500 10" stroke="#222" stroke-width="1.600"/></svg>
<svg style="left:249px;top:204px" width="18" height="16" viewBox="0 0 18 16"><rect x="0.500" y="1.500" width="15" height="13" rx="1.500" fill="#f8f8f8" stroke="#8a8a8a" stroke-width="1"/><path d="M4.500 13 v-7 h4 v-3 h5" fill="none" stroke="#9a9a9a" stroke-width="1" stroke-dasharray="2 1"/></svg>
<svg style="left:248px;top:521px" width="16" height="16" viewBox="0 0 16 16"><path d="M9 3 L15 7.200 L9 11.400 Z" fill="#8a8f98"/><circle cx="6.300" cy="7.200" r="4" fill="#e8eaee" stroke="#8a8f98" stroke-width="1.300"/><path d="M6.300 1.500 v2 M6.300 11.200 v3" stroke="#8a8f98" stroke-width="1"/></svg>
<svg style="left:682px;top:205px" width="16" height="15" viewBox="0 0 16 15"><path d="M1 6.500 l6.500 -5.500 l6.500 3 l1.500 3.500 v4.500 l-5 2.500 l-8.500 -3.500 z" fill="#fff" stroke="#39424f" stroke-width="1.300" stroke-linejoin="round"/><path d="M7.500 1 l-6.500 5.500 l5.500 2.500 z" fill="#9aa3b0" stroke="#39424f" stroke-width="1"/><path d="M6.500 9 v5 M6.500 9 l3.500 -7 M9.500 13.500 v-4 h3 v3" fill="none" stroke="#39424f" stroke-width="1"/></svg>
<svg style="left:661px;top:209px" width="9" height="8" viewBox="0 0 9 8"><path d="M0 0.800 h9" stroke="#222" stroke-width="1.600"/><path d="M0 3 h9 l-4.500 4.500 z" fill="#222"/></svg>
<svg style="left:661px;top:526px" width="9" height="8" viewBox="0 0 9 8"><path d="M0 0.800 h9" stroke="#222" stroke-width="1.600"/><path d="M0 3 h9 l-4.500 4.500 z" fill="#222"/></svg>
<svg style="left:1208px;top:209px" width="9" height="8" viewBox="0 0 9 8"><path d="M0 0.800 h9" stroke="#222" stroke-width="1.600"/><path d="M0 3 h9 l-4.500 4.500 z" fill="#222"/></svg>
<svg style="left:0px;top:0px" width="1224" height="860" viewBox="0 0 1224 860"><g fill="none" stroke="#111" stroke-width="1" stroke-linejoin="round"><path d="M256.2 494.2 L257.5 498.0"/><path d="M256.2 419.2 L261.7 446.7 L273.3 466.7 L283.3 486.7 L290.8 498.0"/><path d="M256.2 332.0 L259.5 345.0 L260.0 360.0 L263.8 380.0 L266.7 395.0 L275.8 416.7 L280.8 435.0 L290.0 453.3 L298.3 470.0 L303.3 487.5 L312.5 498.0"/><path d="M256.2 269.2 L262.5 282.5 L270.0 300.0 L272.5 312.5 L273.8 330.0 L276.2 352.5 L281.2 367.5 L286.2 385.0 L293.3 410.0 L303.3 431.7 L315.8 461.7 L330.0 478.3 L347.5 498.0"/><path d="M256.2 225.0 L265.0 242.5 L277.5 265.0 L290.0 287.5 L301.2 305.0 L306.2 313.8 L308.8 327.5 L310.8 340.0 L307.5 355.0 L305.5 366.2 L312.5 385.0 L320.0 399.2 L341.7 430.0 L356.7 444.2 L375.0 460.0 L397.5 470.0 L415.0 488.3 L439.2 498.0"/><path d="M283.0 224.2 L295.0 242.5 L307.5 260.0 L322.5 282.5 L332.5 305.0 L342.5 322.5 L352.5 340.0 L360.0 351.2 L372.5 365.0 L385.0 380.0 L397.5 394.2 L415.0 410.0 L435.0 425.0 L465.0 439.5 L490.0 450.0 L515.0 460.5 L546.0 473.0 L567.6 483.0 L608.6 497.8"/><path d="M322.0 224.2 L335.0 240.0 L350.0 253.8 L370.0 271.2 L390.0 287.5 L410.0 301.2 L420.0 312.5 L435.0 327.5 L450.0 345.0 L462.5 362.5 L473.8 378.8 L490.0 387.5 L515.0 400.0 L546.0 410.0 L555.0 415.0 L586.2 429.0 L619.2 450.0"/><path d="M384.5 224.2 L397.5 233.8 L410.0 243.8 L422.5 258.8 L437.5 273.8 L455.0 287.5 L470.0 300.0 L480.0 312.5 L490.0 326.2 L502.5 342.5 L520.0 352.5 L537.5 363.8 L550.0 368.0 L567.5 374.2 L590.0 386.2 L619.2 400.5"/><path d="M450.0 224.2 L460.0 241.2 L472.5 258.8 L483.8 273.8 L500.0 286.2 L517.5 300.0 L535.0 312.5 L555.0 326.2 L575.0 338.8 L595.0 351.2 L619.2 364.5"/><path d="M508.8 224.2 L525.0 238.8 L545.0 256.2 L565.0 273.8 L585.0 290.0 L605.0 305.0 L619.2 315.5"/><path d="M532.5 224.2 L550.0 238.8 L575.0 258.8 L600.0 280.0 L619.2 294.5"/><path d="M556.2 224.2 L575.0 238.8 L600.0 258.8 L619.2 274.5"/><path d="M582.0 224.2 L600.0 240.0 L619.2 257.5"/><rect x="397.500" y="312.500" width="117" height="81.500"/><path d="M343.750 357.500 H549.500 V374.500 M541.250 365 L549.500 357.500 L556.250 365"/><path d="M572 359.500 h4 m2.500 0 h4 m2.500 0 h4" stroke-width="1.200"/></g><g fill="none" stroke="#2454c8" stroke-width="1"><path d="M343.750 357.500 V374.500 M336.250 365 L343.750 357.500 L351.250 365"/><path d="M304.500 359.500 h4 m2.500 0 h4 m2.500 0 h4" stroke-width="1.200"/></g><text x="287" y="347.500" font-family="Liberation Sans, sans-serif" font-size="13" fill="#2454c8" textLength="35.5" lengthAdjust="spacingAndGlyphs">Ct&amp;Fill</text><text x="571.500" y="349.500" font-family="Liberation Sans, sans-serif" font-size="13" fill="#111" textLength="35" lengthAdjust="spacingAndGlyphs">Ct&amp;Fill</text></svg>
<svg style="left:0px;top:0px" width="1224" height="860" viewBox="0 0 1224 860">
<defs><pattern id="earth" x="246" y="697.800" width="20.700" height="20" patternUnits="userSpaceOnUse">
<g stroke="#d6d6d6" stroke-width="1" fill="none" shape-rendering="crispEdges">
<path d="M0 1.500 h8.800 M0 5 h8.800 M0 8.500 h8.800"/>
<path d="M10.500 0 v10 M14.500 0 v10 M18.500 0 v10"/>
<path d="M0.500 10 v10 M4.500 10 v10 M8.500 10 v10"/>
<path d="M9.500 11.500 h10.500 M9.500 15 h10.500 M9.500 18.500 h10.500"/>
</g></pattern></defs>
<path d="M246.250 715.750 L383.750 704.250 L438.750 704.250 L438.750 699.500 L656.250 678.750 L656.250 815 L246.250 815 Z" fill="url(#earth)"/>
<path d="M246.250 715.750 L383.750 704.250 L403 704.250 M438.750 699.750 L656.250 678.750" stroke="#111" stroke-width="1.300" fill="none"/>
<rect x="301.250" y="700.500" width="257.500" height="3.700" rx="1.200" fill="#fff" stroke="#111" stroke-width="1.200"/>
</svg>
<svg style="left:0px;top:0px" width="1224" height="860" viewBox="0 0 1224 860"><defs><linearGradient id="gg" x1="0" y1="1" x2="1" y2="0"><stop offset="0" stop-color="#b6d26c"/><stop offset="0.450" stop-color="#a9c361"/><stop offset="1" stop-color="#a5be5f"/></linearGradient></defs><path d="M696.8 505.8 L727.5 530.0 L752.5 548.0 L772.5 562.0 L795.0 576.2 L815.0 590.0 L835.0 602.5 L855.0 616.2 L875.0 630.0 L894.5 643.0 L894.500 685 L696.750 578.750 Z" fill="#c28a57" stroke="#0a0a0a" stroke-width="1.250" stroke-linejoin="round"/><path d="M894.5 643.0 L915.0 631.2 L930.0 621.2 L950.0 606.2 L965.0 597.5 L988.8 584.5 L1010.0 574.5 L1040.0 561.0 L1068.0 548.0 L1100.0 535.0 L1130.0 522.5 L1160.0 510.0 L1192.5 497.0 L1192.500 576 L894.500 685 Z" fill="#8a613e" stroke="#0a0a0a" stroke-width="1.250" stroke-linejoin="round"/><path d="M696.8 505.8 L717.5 491.2 L751.2 472.0 L800.0 447.0 L855.0 420.0 L910.0 396.2 L965.0 372.5 L994.8 355.5 L1018.0 374.5 L1048.0 393.8 L1090.5 420.5 L1115.5 440.5 L1148.0 466.2 L1183.0 491.2 L1192.5 497.0 L1160.0 510.0 L1130.0 522.5 L1100.0 535.0 L1068.0 548.0 L1040.0 561.0 L1010.0 574.5 L988.8 584.5 L965.0 597.5 L950.0 606.2 L930.0 621.2 L915.0 631.2 L894.5 643.0 L875.0 630.0 L855.0 616.2 L835.0 602.5 L815.0 590.0 L795.0 576.2 L772.5 562.0 L752.5 548.0 L727.5 530.0 L696.8 505.8 Z" fill="url(#gg)" stroke="#0a0a0a" stroke-width="1.250" stroke-linejoin="round"/><g fill="none" stroke="#0a0a0a" stroke-width="1.150" stroke-linejoin="round"><path d="M964.2 373.0 L988.0 373.8 L1018.0 375.0"/><path d="M855.0 420.0 L880.0 424.5 L915.0 428.2 L952.5 428.8 L980.5 428.0 L996.0 427.5 L1030.5 425.0 L1090.5 420.5"/><path d="M800.0 447.0 L845.0 447.5 L890.0 449.5 L927.5 450.0 L965.0 453.0 L975.5 454.5 L1000.5 453.8 L1030.5 450.0 L1068.0 445.0 L1115.5 440.5"/><path d="M751.2 472.5 L790.0 475.0 L840.0 475.5 L887.5 476.2 L890.0 477.0 L927.5 479.5 L943.0 480.0 L965.0 482.5 L980.5 483.8 L1000.5 483.0 L1018.0 480.5 L1043.0 476.2 L1093.0 470.5 L1148.0 466.2"/><path d="M717.5 491.8 L752.5 497.5 L790.0 503.8 L827.5 510.0 L865.0 515.0 L902.5 518.2 L940.0 519.5 L950.5 519.5 L988.0 518.8 L1030.5 513.0 L1093.0 505.0 L1143.0 498.8 L1183.0 493.0"/><path d="M698.8 508.0 L740.0 516.2 L777.5 522.0 L800.0 525.0 L822.5 532.5 L835.0 543.8 L865.0 550.0 L902.5 555.5 L940.0 558.0 L962.5 557.5 L996.0 553.8 L1030.0 551.5 L1068.0 548.0"/><path d="M727.5 530.0 L760.0 537.5 L780.0 546.2 L802.5 555.5 L830.0 562.5 L865.0 572.5 L905.0 582.0 L940.0 586.2 L970.0 587.0 L988.8 584.5"/><path d="M772.5 562.0 L790.0 567.5 L815.0 577.5 L845.0 586.2 L877.5 595.0 L910.0 602.0 L940.0 605.5 L950.0 606.0"/><path d="M835.0 602.5 L860.0 608.8 L890.0 615.0 L915.0 618.8 L930.0 620.5"/><path d="M882.5 634.5 L902.5 637.5 L905.5 637.0"/></g><path d="M874.5 483.2 L890.0 477.0 L927.5 479.5 L965.0 482.5 L943.0 480.0 L980.5 484.0 L1000.5 483.2 L1014.2 481.8 L929.2 512.5 Z" fill="#a3a3a3" stroke="#333" stroke-width="0.600"/><path d="M929.2 512.8 L1016.8 481.2" stroke="#111" stroke-width="1.600" fill="none"/><path d="M894.500 643 V685" stroke="#111" stroke-width="1"/></svg>
<div style="left:621px;top:224.5px;width:34.5px;height:117px;border:2px solid #c3c3c3;border-radius:6px;background:#f5f5f5;"></div>
<svg style="left:621px;top:224.5px" width="34.5" height="117" viewBox="0 0 34.5 117"><circle cx="27.300" cy="6.500" r="3.600" fill="#c6c6c6"/><path d="M25.600 4.800 l3.400 3.400 m0 -3.400 l-3.400 3.400" stroke="#fff" stroke-width="1"/><path d="M5.500 31.500 a9.500 9.500 0 0 1 9.500 -9.500 h7 a2 2 0 0 1 2 2 v7.500 a9.500 9.500 0 0 1 -9.500 9.500 a9 9 0 0 1 -9 -9.500 z" fill="#fafafa" stroke="#9a9a9a" stroke-width="1.200"/><circle cx="14" cy="31" r="4.800" fill="#f0f0f0" stroke="#9a9a9a" stroke-width="1.100"/><path d="M10.600 34.500 l-2.600 3 M17.400 34.500 l2.600 3" stroke="#9a9a9a" stroke-width="1"/><text x="16.500" y="45" font-family="Liberation Sans, sans-serif" font-size="9.500" fill="#5b8fd0" stroke="#5b8fd0" stroke-width="0.300" letter-spacing="-0.500">2D</text><path d="M13.500 50 h5.500 l-2.750 3 z" fill="#8a8a8a"/><path d="M4 57.500 h26" stroke="#c8c8c8" stroke-width="1"/><rect x="9.500" y="66.500" width="10" height="10" fill="#b4d8aa" stroke="#8ab888" stroke-width="1"/><circle cx="20" cy="77" r="3" fill="#fff" stroke="#9a9a9a" stroke-width="1.100"/><path d="M22 79.500 l3 3" stroke="#9a9a9a" stroke-width="1.600"/><path d="M13.500 92 h5.500 l-2.750 3 z" fill="#8a8a8a"/><circle cx="27.300" cy="109.5" r="3.600" fill="#c6c6c6"/><path d="M25.300 109.5 h4" stroke="#fff" stroke-width="1.200"/></svg>
<div style="left:621px;top:542px;width:34.5px;height:117px;border:2px solid #c3c3c3;border-radius:6px;background:#f5f5f5;"></div>
<svg style="left:621px;top:542px" width="34.5" height="117" viewBox="0 0 34.5 117"><circle cx="27.300" cy="6.500" r="3.600" fill="#c6c6c6"/><path d="M25.600 4.800 l3.400 3.400 m0 -3.400 l-3.400 3.400" stroke="#fff" stroke-width="1"/><path d="M5.500 31.500 a9.500 9.500 0 0 1 9.500 -9.500 h7 a2 2 0 0 1 2 2 v7.500 a9.500 9.500 0 0 1 -9.500 9.500 a9 9 0 0 1 -9 -9.500 z" fill="#fafafa" stroke="#9a9a9a" stroke-width="1.200"/><circle cx="14" cy="31" r="4.800" fill="#f0f0f0" stroke="#9a9a9a" stroke-width="1.100"/><path d="M10.600 34.500 l-2.600 3 M17.400 34.500 l2.600 3" stroke="#9a9a9a" stroke-width="1"/><text x="16.500" y="45" font-family="Liberation Sans, sans-serif" font-size="9.500" fill="#5b8fd0" stroke="#5b8fd0" stroke-width="0.300" letter-spacing="-0.500">2D</text><path d="M13.500 50 h5.500 l-2.750 3 z" fill="#8a8a8a"/><path d="M4 57.500 h26" stroke="#c8c8c8" stroke-width="1"/><rect x="9.500" y="66.500" width="10" height="10" fill="#b4d8aa" stroke="#8ab888" stroke-width="1"/><circle cx="20" cy="77" r="3" fill="#fff" stroke="#9a9a9a" stroke-width="1.100"/><path d="M22 79.500 l3 3" stroke="#9a9a9a" stroke-width="1.600"/><path d="M13.500 92 h5.500 l-2.750 3 z" fill="#8a8a8a"/><circle cx="27.300" cy="109.5" r="3.600" fill="#c6c6c6"/><path d="M25.300 109.5 h4" stroke="#fff" stroke-width="1.200"/></svg>
<div style="left:1167.5px;top:350px;width:34.5px;height:118px;border:2px solid #c3c3c3;border-radius:6px;background:#f5f5f5;"></div>
<svg style="left:1167.5px;top:350px" width="34.5" height="118" viewBox="0 0 34.5 118"><circle cx="27.300" cy="6.500" r="3.600" fill="#c6c6c6"/><path d="M25.600 4.800 l3.400 3.400 m0 -3.400 l-3.400 3.400" stroke="#fff" stroke-width="1"/><path d="M5.500 31.500 a9.500 9.500 0 0 1 9.500 -9.500 h7 a2 2 0 0 1 2 2 v7.500 a9.500 9.500 0 0 1 -9.500 9.500 a9 9 0 0 1 -9 -9.500 z" fill="#fafafa" stroke="#9a9a9a" stroke-width="1.200"/><circle cx="14" cy="31" r="4.800" fill="#f0f0f0" stroke="#9a9a9a" stroke-width="1.100"/><path d="M10.600 34.500 l-2.600 3 M17.400 34.500 l2.600 3" stroke="#9a9a9a" stroke-width="1"/><path d="M13.500 50 h5.500 l-2.750 3 z" fill="#8a8a8a"/><path d="M4 57.500 h26" stroke="#c8c8c8" stroke-width="1"/><rect x="9.500" y="66.500" width="10" height="10" fill="#b4d8aa" stroke="#8ab888" stroke-width="1"/><circle cx="20" cy="77" r="3" fill="#fff" stroke="#9a9a9a" stroke-width="1.100"/><path d="M22 79.500 l3 3" stroke="#9a9a9a" stroke-width="1.600"/><path d="M13.500 92 h5.500 l-2.750 3 z" fill="#8a8a8a"/><circle cx="27.300" cy="110.5" r="3.600" fill="#c6c6c6"/><path d="M25.300 110.5 h4" stroke="#fff" stroke-width="1.200"/></svg>
<div style="left:664px;top:353px;width:2px;height:17px;background:#6e6e6e;"></div>
<div style="left:664px;top:669px;width:2px;height:17px;background:#6e6e6e;"></div>
<div style="left:1211px;top:511px;width:2px;height:17px;background:#6e6e6e;"></div>
<div style="left:586px;top:506px;width:17px;height:2px;background:#6e6e6e;"></div>
<div style="left:586px;top:822px;width:17px;height:2px;background:#6e6e6e;"></div>
<div style="left:1107px;top:822px;width:17px;height:2px;background:#6e6e6e;"></div>
<svg style="left:662px;top:505px" width="9" height="9" viewBox="0 0 9 9"><g fill="#bcbcbc"><rect x="6" y="0" width="2" height="2"/><rect x="3" y="3" width="2" height="2"/><rect x="6" y="3" width="2" height="2"/><rect x="0" y="6" width="2" height="2"/><rect x="3" y="6" width="2" height="2"/><rect x="6" y="6" width="2" height="2"/></g></svg>
<svg style="left:662px;top:821px" width="9" height="9" viewBox="0 0 9 9"><g fill="#bcbcbc"><rect x="6" y="0" width="2" height="2"/><rect x="3" y="3" width="2" height="2"/><rect x="6" y="3" width="2" height="2"/><rect x="0" y="6" width="2" height="2"/><rect x="3" y="6" width="2" height="2"/><rect x="6" y="6" width="2" height="2"/></g></svg>
<svg style="left:1209px;top:821px" width="9" height="9" viewBox="0 0 9 9"><g fill="#bcbcbc"><rect x="6" y="0" width="2" height="2"/><rect x="3" y="3" width="2" height="2"/><rect x="6" y="3" width="2" height="2"/><rect x="0" y="6" width="2" height="2"/><rect x="3" y="6" width="2" height="2"/><rect x="6" y="6" width="2" height="2"/></g></svg>
<div class="t" style="left:270.5px;top:500.99px;font-size:11px;line-height:13px;letter-spacing:-0.190px;">1 : 500</div>
<div class="t" style="left:270.5px;top:816.99px;font-size:11px;line-height:13px;letter-spacing:-0.207px;">1 : 100</div>
<div class="t" style="left:704px;top:816.99px;font-size:11px;line-height:13px;letter-spacing:-0.207px;">1 : 100</div>
<svg style="left:0px;top:0px" width="1224" height="860" viewBox="0 0 1224 860"><g transform="translate(325 500)"><rect x="0.500" y="0.500" width="15" height="10" fill="#fff" stroke="#333" stroke-width="1"/><rect x="1" y="1" width="14" height="9" fill="#8a8a8a"/><path d="M2 2.500 h13 M1 4.500 h13 M2 6.500 h13 M1 8.500 h13" stroke="#e8e8e8" stroke-width="1" stroke-dasharray="1 1"/></g><g transform="translate(347 500.5)"><path d="M0.500 4.500 h11 v8 h-11 z M0.500 4.500 l4 -4 h11 l-4 4 M15.500 0.500 v8 l-4 4" fill="#fff" stroke="#333" stroke-width="1.100" stroke-linejoin="round"/></g><g transform="translate(366.5 499)"><circle cx="6" cy="6" r="3" fill="none" stroke="#bbb" stroke-width="0.900" stroke-dasharray="1.500 1"/><path d="M6 0 v2 M0 6 h2 M1.800 1.800 l1.400 1.400 M10.200 1.800 l-1.400 1.400" stroke="#c4c4c4" stroke-width="1"/><path d="M8.500 7.500 l5.500 5.500 m0 -5.500 l-5.500 5.500" stroke="#c0c0c0" stroke-width="1.600" stroke-dasharray="1.500 0.800"/></g><g transform="translate(390 499.5)"><circle cx="5.500" cy="5" r="4" fill="none" stroke="#bbb" stroke-width="1" stroke-dasharray="1.500 1"/><path d="M1 12.500 h7" stroke="#bbb" stroke-width="1.400"/><path d="M7.500 7.500 l5.500 5.500 m0 -5.500 l-5.500 5.500" stroke="#c0c0c0" stroke-width="1.600" stroke-dasharray="1.500 0.800"/></g><g transform="translate(408 499.5)"><path d="M3.400 11.900 V3.100 H15.600" fill="none" stroke="#b8b8b8" stroke-width="1.500"/><path d="M6.100 11.900 V5.500 H15.600 M8.500 8 H13" fill="none" stroke="#c4c4c4" stroke-width="1"/><path d="M0.600 7.700 v2.600" stroke="#b8b8b8" stroke-width="1"/></g><g transform="translate(429 499)"><path d="M2.600 12.400 V3.600 H9.500" fill="none" stroke="#1c64c0" stroke-width="1.600"/><path d="M5.300 9.700 V5.800 H9 M5.300 9.700 H9" fill="none" stroke="#333" stroke-width="0.800"/><path d="M6 7.800 H8.500" stroke="#e0202a" stroke-width="1.400"/><path d="M0.300 8 v2.600 M9 1.500 h2.500" stroke="#222" stroke-width="1"/><circle cx="12.500" cy="6.300" r="2.700" fill="#e8f4ff" stroke="#1c7ae0" stroke-width="1.400"/><rect x="11.400" y="9.300" width="2.200" height="2.700" fill="#ddd" stroke="#444" stroke-width="0.800"/></g><g transform="translate(450 500)"><path d="M0.200 3.400 C1.500 3.400 3.500 5.500 5 7.700 M15.200 4.500 C14.500 1.500 10.500 -0.500 7.100 1.300" fill="none" stroke="#222" stroke-width="1"/><ellipse cx="7.600" cy="8.200" rx="2.900" ry="2" transform="rotate(-20 7.600 8.200)" fill="#cfe4f4" stroke="#222" stroke-width="1"/><ellipse cx="13" cy="5.800" rx="2.500" ry="2" transform="rotate(-20 13 5.800)" fill="#cfe4f4" stroke="#222" stroke-width="1"/><path d="M10 7 l0.800 -0.500" stroke="#222" stroke-width="1"/></g><g transform="translate(476 501)"><circle cx="3.400" cy="4.300" r="2.700" fill="#e8f4ff" stroke="#1c7ae0" stroke-width="1.400"/><rect x="2.300" y="7.300" width="2.200" height="2.700" fill="#ddd" stroke="#444" stroke-width="0.800"/></g><g transform="translate(492.5 499.5)"><rect x="1.200" y="2.300" width="12.800" height="9.100" fill="#eceef2" stroke="#111" stroke-width="1.500" stroke-dasharray="3.200 1.300"/><rect x="8" y="6.500" width="6.500" height="5.800" rx="0.800" fill="#fff" stroke="#111" stroke-width="1.100"/><rect x="10.200" y="8.500" width="2.200" height="2" fill="#222"/></g><g transform="translate(513.5 499)"><path d="M0.500 0 v5 M15.500 0 v5 M0.500 2.500 h15" stroke="#333" stroke-width="1" fill="none"/><path d="M0.500 6 v6 M1 11.500 h8" stroke="#555" stroke-width="1" stroke-dasharray="1.500 1" fill="none"/><rect x="9.500" y="8.500" width="6.500" height="4.500" rx="1" fill="#888" stroke="#333" stroke-width="1"/><path d="M11 8.500 v-1.500 a1.800 1.800 0 0 1 3.600 0 v1.500" fill="none" stroke="#333" stroke-width="1"/></g><g transform="translate(325 816)"><rect x="0.500" y="0.500" width="15" height="11" rx="1" fill="#f4f4f8" stroke="#333" stroke-width="1"/></g><g transform="translate(347 816.5)"><path d="M0.500 4.500 h11 v8 h-11 z M0.500 4.500 l4 -4 h11 l-4 4 M15.500 0.500 v8 l-4 4" fill="#fff" stroke="#333" stroke-width="1.100" stroke-linejoin="round"/></g><g transform="translate(366.5 815)"><circle cx="6" cy="6" r="3.300" fill="#ffd840" stroke="#d89000" stroke-width="0.900"/><path d="M6 0 v2 M6 10 v2 M0 6 h2 M10 6 h2 M1.800 1.800 l1.400 1.400 M10.200 1.800 l-1.400 1.400 M1.800 10.200 l1.400 -1.400" stroke="#e0a000" stroke-width="1"/><path d="M9 8 l5.500 5.500 m0 -5.500 l-5.500 5.500" stroke="#d8202a" stroke-width="2"/></g><g transform="translate(390 815.5)"><circle cx="5.500" cy="5" r="4.200" fill="#e4f0fc" stroke="#2b78c5" stroke-width="1.200"/><path d="M1 12.500 h7" stroke="#2b78c5" stroke-width="1.600"/><path d="M8 7.500 l5.500 5.500 m0 -5.500 l-5.500 5.500" stroke="#d8202a" stroke-width="2"/></g><g transform="translate(408 815.5)"><path d="M3.400 11.900 V3.100 H15.600" fill="none" stroke="#1c64c0" stroke-width="1.600"/><path d="M6.100 9.200 V5 H13 V9.200 Z" fill="none" stroke="#333" stroke-width="0.800"/><path d="M6.600 7.400 H10.500" stroke="#e0202a" stroke-width="1.400"/><path d="M0.600 7.700 v2.600 M10.300 1 h2.500" stroke="#222" stroke-width="1"/></g><g transform="translate(429.5 815)"><path d="M2.600 12.400 V3.600 H9.500" fill="none" stroke="#1c64c0" stroke-width="1.600"/><path d="M5.300 9.700 V5.800 H9 M5.300 9.700 H9" fill="none" stroke="#333" stroke-width="0.800"/><path d="M6 7.800 H8.500" stroke="#e0202a" stroke-width="1.400"/><path d="M0.300 8 v2.600 M9 1.500 h2.500" stroke="#222" stroke-width="1"/><circle cx="12.500" cy="6.300" r="2.700" fill="#e8f4ff" stroke="#1c7ae0" stroke-width="1.400"/><rect x="11.400" y="9.300" width="2.200" height="2.700" fill="#ddd" stroke="#444" stroke-width="0.800"/></g><g transform="translate(450 816)"><path d="M0.200 3.400 C1.500 3.400 3.500 5.500 5 7.700 M15.200 4.500 C14.500 1.500 10.500 -0.500 7.100 1.300" fill="none" stroke="#222" stroke-width="1"/><ellipse cx="7.600" cy="8.200" rx="2.900" ry="2" transform="rotate(-20 7.600 8.200)" fill="#cfe4f4" stroke="#222" stroke-width="1"/><ellipse cx="13" cy="5.800" rx="2.500" ry="2" transform="rotate(-20 13 5.800)" fill="#cfe4f4" stroke="#222" stroke-width="1"/><path d="M10 7 l0.800 -0.500" stroke="#222" stroke-width="1"/></g><g transform="translate(476 817)"><circle cx="3.400" cy="4.300" r="2.700" fill="#e8f4ff" stroke="#1c7ae0" stroke-width="1.400"/><rect x="2.300" y="7.300" width="2.200" height="2.700" fill="#ddd" stroke="#444" stroke-width="0.800"/></g><g transform="translate(492.5 815.5)"><rect x="1.200" y="2.300" width="12.800" height="9.100" fill="#eceef2" stroke="#111" stroke-width="1.500" stroke-dasharray="3.200 1.300"/><rect x="8" y="6.500" width="6.500" height="5.800" rx="0.800" fill="#fff" stroke="#111" stroke-width="1.100"/><rect x="10.200" y="8.500" width="2.200" height="2" fill="#222"/></g><g transform="translate(513 815)"><path d="M0.500 0 v5 M15.500 0 v5 M0.500 2.500 h15" stroke="#333" stroke-width="1" fill="none"/><path d="M0.500 6 v6 M1 11.500 h8" stroke="#555" stroke-width="1" stroke-dasharray="1.500 1" fill="none"/><rect x="9.500" y="8.500" width="6.500" height="4.500" rx="1" fill="#888" stroke="#333" stroke-width="1"/><path d="M11 8.500 v-1.500 a1.800 1.800 0 0 1 3.600 0 v1.500" fill="none" stroke="#333" stroke-width="1"/></g><g transform="translate(758.5 815.5)"><rect x="0.500" y="0.500" width="15" height="10" fill="#fff" stroke="#333" stroke-width="1"/><rect x="1" y="1" width="14" height="3" fill="#333"/><rect x="1" y="4" width="5" height="3" fill="#888"/><rect x="10" y="4" width="5" height="3" fill="#888"/><rect x="5" y="7" width="6" height="3" fill="#333"/></g><g transform="translate(779.5 816)"><path d="M0.500 4.500 h11 v8 h-11 z M0.500 4.500 l4 -4 h11 l-4 4 M15.500 0.500 v8 l-4 4" fill="#b8dcf8" stroke="#1c64c0" stroke-width="1.100" stroke-linejoin="round"/></g><g transform="translate(799 815)"><circle cx="6" cy="6" r="3.300" fill="#ffd840" stroke="#d89000" stroke-width="0.900"/><path d="M6 0 v2 M6 10 v2 M0 6 h2 M10 6 h2 M1.800 1.800 l1.400 1.400 M10.200 1.800 l-1.400 1.400 M1.800 10.200 l1.400 -1.400" stroke="#e0a000" stroke-width="1"/><path d="M9 8 l5.500 5.500 m0 -5.500 l-5.500 5.500" stroke="#d8202a" stroke-width="2"/></g><g transform="translate(822 815)"><circle cx="5.500" cy="5" r="4.300" fill="#e4f0fc" stroke="#2b78c5" stroke-width="1.200"/><ellipse cx="5.500" cy="12.500" rx="4.500" ry="1.200" fill="#9a9a9a"/></g><g transform="translate(841.5 815.5)"><path d="M3 4 h7 l1.500 5 l-2 2.500 h-6 l-2 -2.500 z M3 5 l-3 -1.500 M5 4 v-1.500 h3 v1.500" fill="#f0f0f0" stroke="#666" stroke-width="1"/><circle cx="12.500" cy="7.500" r="2.800" fill="#e8f4ff" stroke="#2b78c5" stroke-width="1.200"/><path d="M11.400 10.300 v2.700 h2.200 v-2.700" fill="#fff" stroke="#2b60b0" stroke-width="1"/></g><g transform="translate(862 815.5)"><path d="M3.400 11.900 V3.100 H15.600" fill="none" stroke="#1c64c0" stroke-width="1.600"/><path d="M6.100 9.200 V5 H13 V9.200 Z" fill="none" stroke="#333" stroke-width="0.800"/><path d="M6.600 7.400 H10.500" stroke="#e0202a" stroke-width="1.400"/><path d="M0.600 7.700 v2.600 M10.300 1 h2.500" stroke="#222" stroke-width="1"/><path d="M8 5.500 l6.500 6.500 m0 -6.500 l-6.500 6.500" stroke="#d8202a" stroke-width="2"/></g><g transform="translate(883 815)"><path d="M2.600 12.400 V3.600 H9.500" fill="none" stroke="#1c64c0" stroke-width="1.600"/><path d="M5.300 9.700 V5.800 H9 M5.300 9.700 H9" fill="none" stroke="#333" stroke-width="0.800"/><path d="M6 7.800 H8.500" stroke="#e0202a" stroke-width="1.400"/><path d="M0.300 8 v2.600 M9 1.500 h2.500" stroke="#222" stroke-width="1"/><circle cx="12.500" cy="6.300" r="2.700" fill="#e8f4ff" stroke="#1c7ae0" stroke-width="1.400"/><rect x="11.400" y="9.300" width="2.200" height="2.700" fill="#ddd" stroke="#444" stroke-width="0.800"/></g><g transform="translate(904 814.5)"><path d="M0.500 6.500 l6 -5.500 l6 3 l1.500 3 v2 M0.500 6.500 v6 l5 2 v-6 z M5.500 8.500 l3.500 -7" fill="#f4f4f4" stroke="#444" stroke-width="1.100" stroke-linejoin="round"/><rect x="8.500" y="9.500" width="7" height="5" rx="1" fill="#fff" stroke="#1a9a7a" stroke-width="1.300"/><path d="M10 9.500 v-1.500 a2 2 0 0 1 4 0" fill="none" stroke="#1a9a7a" stroke-width="1.200"/></g><g transform="translate(925 816)"><path d="M0.200 3.400 C1.500 3.400 3.500 5.500 5 7.700 M15.200 4.500 C14.500 1.500 10.500 -0.500 7.100 1.300" fill="none" stroke="#222" stroke-width="1"/><ellipse cx="7.600" cy="8.200" rx="2.900" ry="2" transform="rotate(-20 7.600 8.200)" fill="#cfe4f4" stroke="#222" stroke-width="1"/><ellipse cx="13" cy="5.800" rx="2.500" ry="2" transform="rotate(-20 13 5.800)" fill="#cfe4f4" stroke="#222" stroke-width="1"/><path d="M10 7 l0.800 -0.500" stroke="#222" stroke-width="1"/></g><g transform="translate(951 817)"><circle cx="3.400" cy="4.300" r="2.700" fill="#e8f4ff" stroke="#1c7ae0" stroke-width="1.400"/><rect x="2.300" y="7.300" width="2.200" height="2.700" fill="#ddd" stroke="#444" stroke-width="0.800"/></g><g transform="translate(967.5 815.5)"><rect x="1.200" y="2.300" width="12.800" height="9.100" fill="#eceef2" stroke="#111" stroke-width="1.500" stroke-dasharray="3.200 1.300"/><rect x="8" y="6.500" width="6.500" height="5.800" rx="0.800" fill="#fff" stroke="#111" stroke-width="1.100"/><rect x="10.200" y="8.500" width="2.200" height="2" fill="#222"/></g><g transform="translate(988 815.5)"><path d="M0.500 5.500 h10 v8 h-10 z M0.500 5.500 l4 -4 h10 l-4 4 M14.500 1.500 v8 l-4 4 M4.500 1.500 v8 h10 M4.500 9.500 l-4 4" fill="none" stroke="#777" stroke-width="1" stroke-linejoin="round"/><path d="M2.500 7.500 h6 v4 h-6 z" fill="#aaa"/></g><g transform="translate(1008.5 815)"><path d="M0.500 0 v5 M15.500 0 v5 M0.500 2.500 h15" stroke="#333" stroke-width="1" fill="none"/><path d="M0.500 6 v6 M1 11.500 h8" stroke="#555" stroke-width="1" stroke-dasharray="1.500 1" fill="none"/><rect x="9.500" y="8.500" width="6.500" height="4.500" rx="1" fill="#888" stroke="#333" stroke-width="1"/><path d="M11 8.500 v-1.500 a1.800 1.800 0 0 1 3.600 0 v1.500" fill="none" stroke="#333" stroke-width="1"/></g></svg>
<svg style="left:0px;top:0px" width="1224" height="860" viewBox="0 0 1224 860">
<defs><linearGradient id="vcl" x1="0" y1="0" x2="1" y2="1"><stop offset="0" stop-color="#f2f2f2"/><stop offset="1" stop-color="#dcdcdc"/></linearGradient>
<radialGradient id="vcs" cx="0.500" cy="0.500" r="0.500"><stop offset="0" stop-color="#c8c8c8"/><stop offset="0.600" stop-color="#e4e4e4"/><stop offset="1" stop-color="#ffffff"/></radialGradient></defs>
<ellipse cx="1136.600" cy="313.500" rx="48.500" ry="24" fill="#f3f3f3" stroke="#d4d4d4" stroke-width="0.800" stroke-dasharray="2 1.500"/>
<ellipse cx="1136.600" cy="311.500" rx="37" ry="18.500" fill="#fdfdfd" stroke="#e2e2e2" stroke-width="0.800"/>
<ellipse cx="1139" cy="313" rx="26" ry="10" fill="url(#vcs)"/>
<polygon points="1111.400,273.500 1138.400,265.100 1162.600,275.300 1133.800,284.100" fill="#f7f7f7" stroke="#8c8c8c" stroke-width="0.900"/>
<polygon points="1111.400,273.500 1133.800,284.100 1133.800,318.700 1112.700,305.100" fill="url(#vcl)" stroke="#8c8c8c" stroke-width="0.900"/>
<polygon points="1133.800,284.100 1162.600,275.300 1161.100,307 1133.800,318.700" fill="url(#vcl)" stroke="#8c8c8c" stroke-width="0.900"/>
<text transform="matrix(1 0.450 0 1 1117.500 294)" font-family="Liberation Sans, sans-serif" font-size="7" fill="#7a7a7a" textLength="11" lengthAdjust="spacingAndGlyphs">LEFT</text>
<text transform="matrix(1 -0.330 0 1 1138 303)" font-family="Liberation Sans, sans-serif" font-size="7.500" fill="#7a7a7a" textLength="21" lengthAdjust="spacingAndGlyphs">FRONT</text>
<text transform="matrix(0.900 -0.300 0.900 0.350 1131 276.500)" font-family="Liberation Sans, sans-serif" font-size="6" fill="#9a9a9a">TOP</text>
<g font-family="Liberation Sans, sans-serif" font-size="6" fill="#c0c0c0"><text x="1104" y="295">W</text><text x="1166" y="298">N</text><text x="1097" y="326">S</text><text x="1164" y="332">E</text></g>
</svg>
<div style="left:728px;top:128px;width:139px;height:124px;background:#ffffff;border:1px solid #767676;"></div>
<div style="left:730px;top:171px;width:135px;height:38px;background:#d3e9f8;border:1px solid #1c7ad2;"></div>
<div class="t" style="left:768.3px;top:142.64px;font-size:12px;line-height:14px;letter-spacing:-0.700px;">Face</div>
<div class="t" style="left:768.3px;top:182.74px;font-size:12px;line-height:14px;letter-spacing:-0.006px;">Element Bottom</div>
<div class="t" style="left:768.3px;top:223.04px;font-size:12px;line-height:14px;letter-spacing:-0.158px;">Lines &amp; Elevation</div>
<svg style="left:736px;top:136px" width="28" height="110" viewBox="0 0 28 110">
<g fill="none" stroke="#666" stroke-width="1">
<path d="M6.500 25.500 V9 H24.500 V25.500 H6.500 L1.500 19.500 V3 M1.500 19.500 H18.500 L24.500 25.500 M18.500 3 V19.500"/>
</g>
<path d="M1.500 3 H18.500 L24.500 9 H6.500 Z" fill="none" stroke="#c8102e" stroke-width="1.800" stroke-linejoin="round"/>
<polygon points="1.500,59.500 18.500,59.500 24.500,65.500 6.500,65.500" fill="#d06080" stroke="#a04060" stroke-width="1"/>
<g fill="none" stroke="#666" stroke-width="1">
<path d="M1.500 43 H18.500 L24.500 49 H6.500 Z M6.500 65.500 V49 M24.500 49 V65.500 M1.500 43 V59.500 M18.500 43 V59.500"/>
</g>
<g fill="none" stroke="#555" stroke-width="1"><path d="M7 87 L17 84 L23 101 L3 104 L9 96 L7 87"/></g>
<g fill="#fff" stroke="#444" stroke-width="1"><rect x="4.500" y="84.500" width="5" height="5"/><rect x="14.500" y="81.500" width="5" height="5"/><rect x="6.500" y="93.500" width="5" height="5"/><rect x="0.500" y="101.500" width="5" height="5"/></g>
<rect x="20.500" y="98.500" width="5" height="5" fill="#70b0e8" stroke="#3a78c0" stroke-width="1"/>
</svg>
<div style="left:0px;top:833px;width:1224px;height:25px;background:#cdcdcd;"></div>
<div class="t" style="left:5px;top:838.84px;font-size:12px;line-height:14px;letter-spacing:-0.700px;">Ready</div>
<div style="left:201px;top:837px;width:204px;height:18px;background:#fff;"></div>
<div style="left:386px;top:838px;width:1px;height:16px;background:#e4e4e4;"></div>
<svg style="left:392px;top:843px" width="10" height="6" viewBox="0 0 10 6"><path d="M0.500 0.500 L5 5 L9.500 0.500" stroke="#8a8a8a" stroke-width="1" fill="none"/></svg>
<div style="left:517px;top:837px;width:204px;height:18px;background:#fff;"></div>
<div class="t" style="left:520px;top:839.34px;font-size:12px;line-height:14px;letter-spacing:0.063px;">Main Model</div>
<svg style="left:709px;top:843px" width="10" height="6" viewBox="0 0 10 6"><path d="M0.500 0.500 L5 5 L9.500 0.500" stroke="#444" stroke-width="1" fill="none"/></svg>
<div style="left:731px;top:839px;width:14px;height:14px;background:#fff;border:1px solid #6a6a6a;"></div>
<svg style="left:731px;top:839px" width="14" height="14" viewBox="0 0 14 14"><path d="M3 7 L6 10 L11.500 3.500" stroke="#2ea02e" stroke-width="2" fill="none"/></svg>
<div class="t" style="left:748px;top:839.34px;font-size:12px;line-height:14px;letter-spacing:-0.077px;">Exclude Options</div>
<div class="t" style="left:434px;top:839.34px;font-size:12px;line-height:14px;">:0</div>
<div class="t" style="left:1119.5px;top:839.34px;font-size:12px;line-height:14px;">:0</div>
<svg style="left:0px;top:833px" width="1224" height="25" viewBox="0 833 1224 25">
<!-- worksets -->
<path d="M178 845 l5 -2 l4 2 v6 l-4 2 l-5 -2 z" fill="#7ab0ee" stroke="#2b60b0" stroke-width="1"/><path d="M183 838 l4 -1.500 l3 1.500 v5 l-3 1.500 l-4 -1.500 z" fill="#8cc860" stroke="#3a7a20" stroke-width="1"/><path d="M190 843 a2.500 2.500 0 1 1 -3 0 v9 h3 z" fill="#fff" stroke="#333" stroke-width="1"/>
<!-- editing requests -->
<path d="M416 838 h9 l2 3 h-8 l-3 6 h5 l-2 6 h-5 l2 -6 z" fill="#b4b4b4" stroke="#9a9a9a" stroke-width="0.800"/>
<!-- design options -->
<rect x="467.500" y="838.500" width="16" height="15" rx="1.500" fill="#fff" stroke="#333" stroke-width="1.400"/><rect x="468" y="839" width="15" height="3" fill="#555"/><path d="M470 845.500 h2 M474 845.500 h7 M470 849.500 h2 M474 849.500 h7" stroke="#222" stroke-width="1.400"/>
<rect x="494" y="838" width="14" height="15" fill="#b0b0b0"/><path d="M496 849 h6 v-3 M499 843 l3 3" stroke="#d8d8d8" stroke-width="1.200" fill="none"/>
<!-- right icons -->
<g fill="none" stroke="#d09a10" stroke-width="1.800"><rect x="950" y="840" width="7" height="5" rx="2.500"/><rect x="956" y="840" width="7" height="5" rx="2.500"/></g><path d="M957 844 l0 9 l2.500 -2.500 l2 3.500 l1.500 -1 l-2 -3.500 h3.500 z" fill="#fff" stroke="#222" stroke-width="0.900"/>
<path d="M975 850 l6 -9 h9 l-6 9 z" fill="#dce8f8" stroke="#2b60b0" stroke-width="1.200"/><path d="M977 846 h8 M979 843 h8" stroke="#2b60b0" stroke-width="1"/><path d="M985 843 l0 9 l2.500 -2.500 l2 3.500 l1.500 -1 l-2 -3.500 h3.500 z" fill="#fff" stroke="#222" stroke-width="0.900"/>
<path d="M1003 838 h8 l-1 5 h2 v2 h-10 v-2 h2 z M1007 845 v7" fill="#f08a30" stroke="#c05010" stroke-width="1"/><path d="M1010 843 l0 9 l2.500 -2.500 l2 3.500 l1.500 -1 l-2 -3.500 h3.500 z" fill="#fff" stroke="#222" stroke-width="0.900"/>
<path d="M1029 840 l6 -1 v13 l-6 1 z" fill="#dce8f8" stroke="#2b60b0" stroke-width="1.300"/><path d="M1037 837 l6 6 m0 -6 l-6 6" stroke="#d0202a" stroke-width="2"/><path d="M1036 844 l0 9 l2.500 -2.500 l2 3.500 l1.500 -1 l-2 -3.500 h3.500 z" fill="#fff" stroke="#222" stroke-width="0.900"/>
<path d="M1058 837 v9 M1053.500 841.500 h9 M1058 836 l-1.500 2 h3 z M1058 847 l-1.500 -2 h3 z M1052.500 841.500 l2 -1.500 v3 z M1063.500 841.500 l-2 -1.500 v3 z" stroke="#222" stroke-width="1" fill="#222"/><path d="M1063 837 l6 6 m0 -6 l-6 6" stroke="#d0202a" stroke-width="2"/><path d="M1062 844 l0 9 l2.500 -2.500 l2 3.500 l1.500 -1 l-2 -3.500 h3.500 z" fill="#fff" stroke="#222" stroke-width="0.900"/>
<circle cx="1086.500" cy="846" r="5.500" fill="none" stroke="#b8b8b8" stroke-width="2.500" stroke-dasharray="2 1.500"/>
<path d="M1102.500 839.500 h15 l-6 7 v7.500 l-3.500 -2 v-5.500 z" fill="#c4c4c4" stroke="#555" stroke-width="1.200" stroke-linejoin="round"/>
<path d="M1194.500 837 v17 M1202.500 837 v17" stroke="#dedede" stroke-width="1"/>
</svg>
<div style="left:1px;top:1px;width:1221px;height:857px;border-radius:8px;box-shadow:0 0 0 12px #2c3544;pointer-events:none;"></div>
<div style="left:0px;top:0px;width:1224px;height:1px;background:#15171b;"></div>
<div style="left:0px;top:0px;width:1px;height:860px;background:#1a1d24;"></div>
</body></html>
